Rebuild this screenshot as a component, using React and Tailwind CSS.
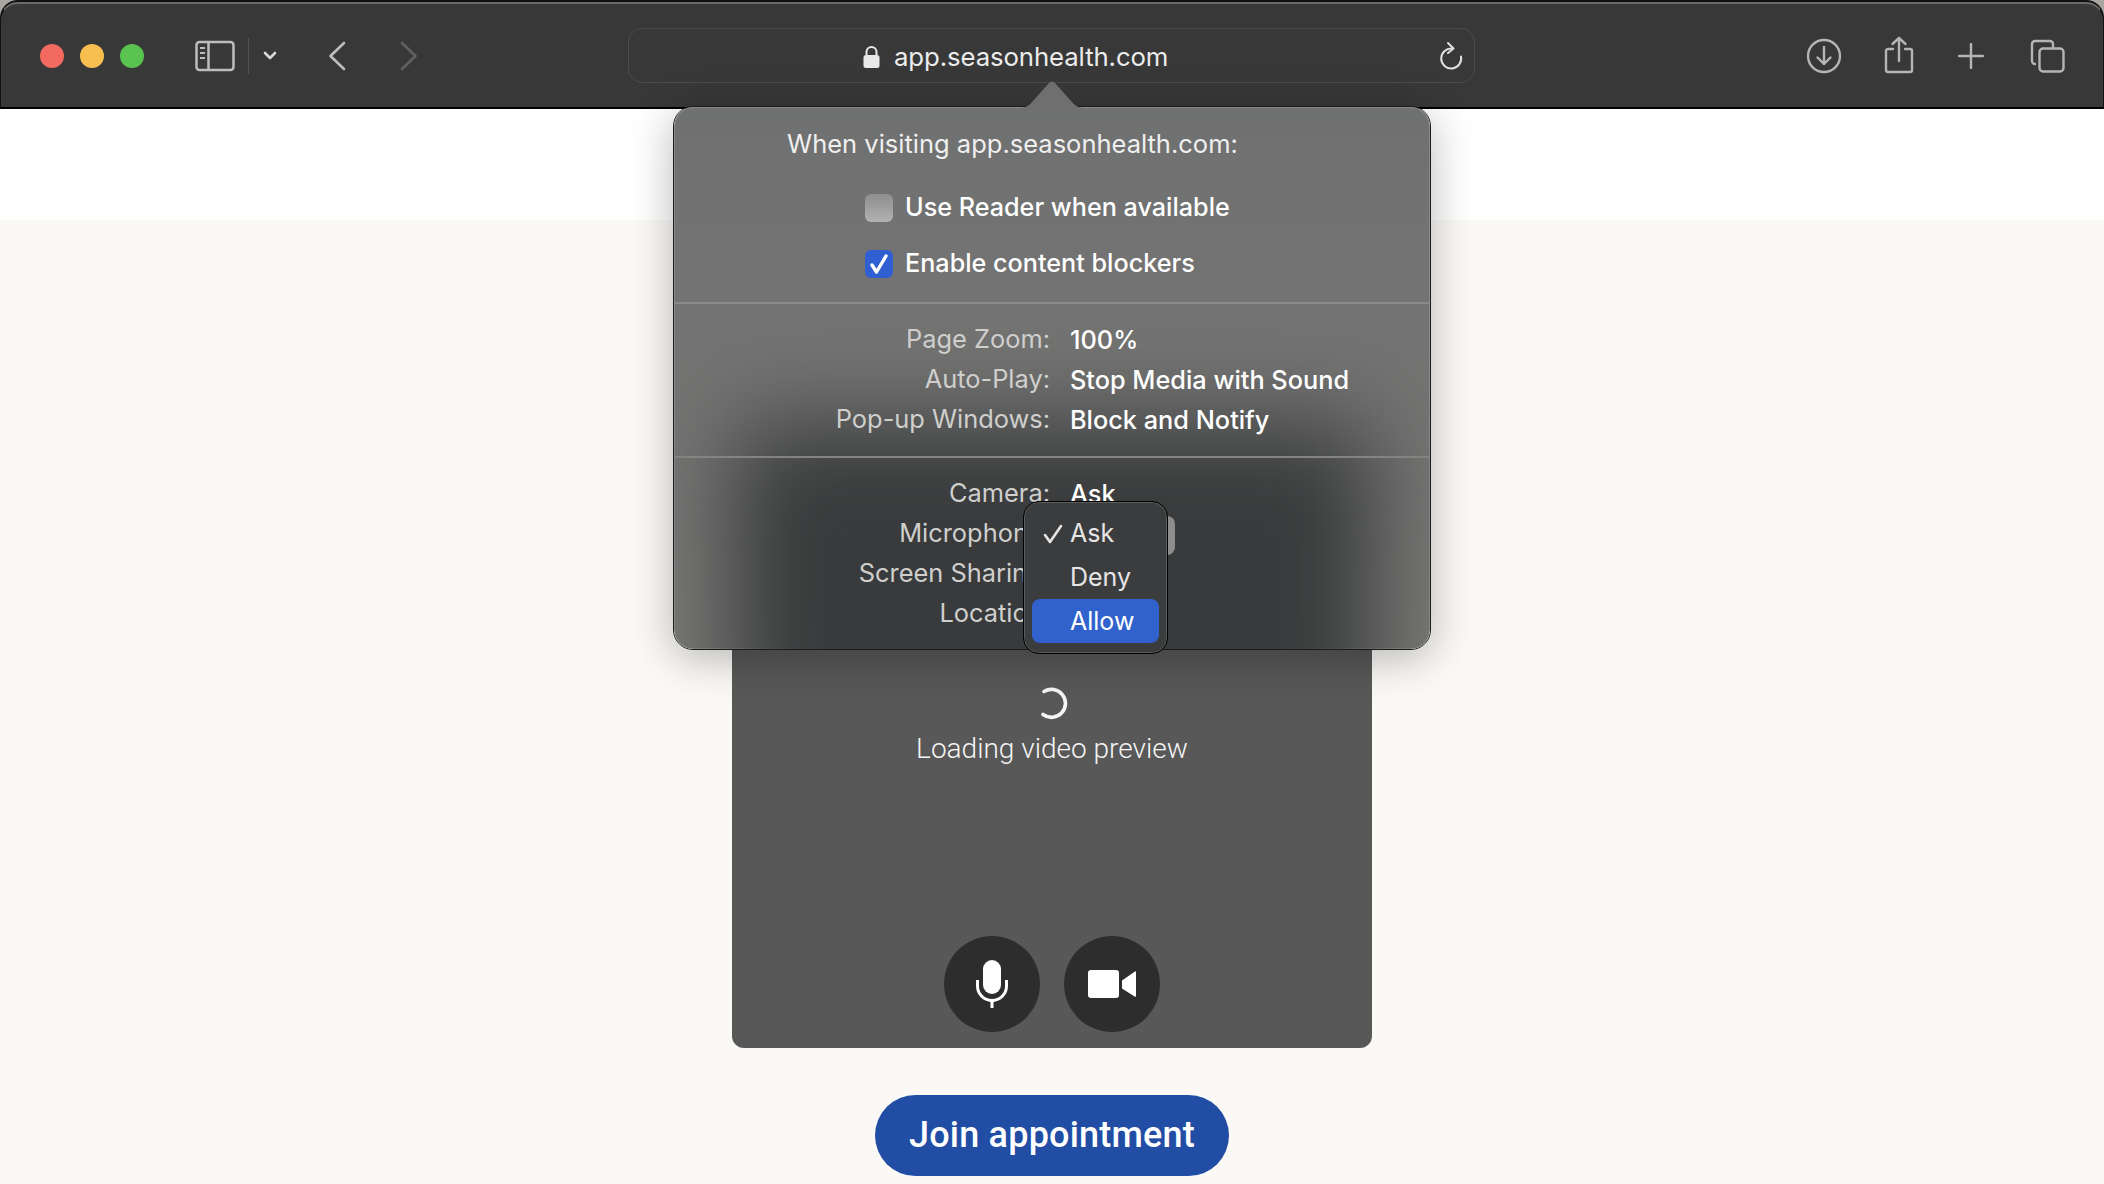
import React from "react";

const Row = ({ label, value }) => (
  <div className="flex h-10 items-center pb-[1px]">
    <div className="w-[376px] shrink-0 text-right text-[25.4px] text-[#cfcfcd]">{label}</div>
    <div className="ml-5 text-[25.3px] font-medium text-white">{value}</div>
  </div>
);

const Toolbar = () => (
  <div className="flex h-[107px] items-center rounded-t-[18px] border-t-2 border-b-2 border-x border-t-[#6a6a6a] border-b-black border-x-[#111] bg-[#383838] shadow-[0_-2px_0_#111] [font-family:Inter,sans-serif]">
    <div className="ml-[39px] flex gap-4">
      <span className="h-6 w-6 rounded-full bg-[#f26a60]" />
      <span className="h-6 w-6 rounded-full bg-[#f7bf4f]" />
      <span className="h-6 w-6 rounded-full bg-[#5ac350]" />
    </div>
    <svg className="ml-[51px]" width="40" height="32" viewBox="0 0 40 32" fill="none" stroke="#bdbdbd" strokeWidth="2.5">
      <rect x="1.5" y="2" width="37" height="28" rx="3" />
      <path d="M13.5 2v28" />
      <path d="M5 8h5M5 13h5M5 18h5" strokeWidth="2" />
    </svg>
    <span className="ml-[13px] h-9 w-px bg-[#505050]" />
    <svg className="ml-[14px]" width="14" height="10" viewBox="0 0 14 10" fill="none" stroke="#d8d8d8" strokeWidth="2.6" strokeLinecap="round" strokeLinejoin="round">
      <path d="M2 2l5 5 5-5" />
    </svg>
    <svg className="ml-[51px]" width="18" height="30" viewBox="0 0 18 30" fill="none" stroke="#bdbdbd" strokeWidth="2.6" strokeLinecap="round" strokeLinejoin="round">
      <path d="M16 2L2.5 15 16 28" />
    </svg>
    <svg className="ml-[54px]" width="18" height="30" viewBox="0 0 18 30" fill="none" stroke="#606060" strokeWidth="2.6" strokeLinecap="round" strokeLinejoin="round">
      <path d="M2 2l13.5 13L2 28" />
    </svg>
    <div className="relative ml-[210px] flex h-[55px] w-[847px] items-center rounded-[14px] border border-[#4c4c4c] pl-[234px] pt-[2px]">
      <svg className="mr-[14px]" width="17" height="24" viewBox="0 0 17 24" fill="#e8e8e8">
        <path d="M2.5 10V7a6 6 0 0 1 12 0v3h-2V7a4 4 0 0 0-8 0v3z" />
        <rect x="0.5" y="10" width="16" height="13" rx="2.5" />
      </svg>
      <span className="text-[25.75px] leading-none tracking-[-0.1px] text-[#ececec]">app.seasonhealth.com</span>
      <svg className="absolute right-[11px] top-[12px]" width="24" height="30" viewBox="0 0 24 30" fill="none" stroke="#e0e0e0" strokeWidth="2" strokeLinecap="round" strokeLinejoin="round">
        <path d="M13 7.5a10 10 0 1 0 9 8" />
        <path d="M9 2l5.5 5.5L9 12" />
      </svg>
    </div>
    <svg className="ml-[331px]" width="36" height="36" viewBox="0 0 36 36" fill="none" stroke="#b5b5b5" strokeWidth="2.4" strokeLinecap="round" strokeLinejoin="round">
      <circle cx="18" cy="18" r="16" />
      <path d="M18 9v17M11.5 19.5L18 26l6.5-6.5" />
    </svg>
    <svg className="ml-[42px] -mt-[2px]" width="30" height="38" viewBox="0 0 30 38" fill="none" stroke="#b5b5b5" strokeWidth="2.4" strokeLinecap="round" strokeLinejoin="round">
      <path d="M9 13H4a2 2 0 0 0-2 2v19a2 2 0 0 0 2 2h22a2 2 0 0 0 2-2V15a2 2 0 0 0-2-2h-5" />
      <path d="M15 25V2M8.5 8L15 2l6.5 6" />
    </svg>
    <svg className="ml-[44px]" width="26" height="26" viewBox="0 0 26 26" fill="none" stroke="#b5b5b5" strokeWidth="2.4" strokeLinecap="round">
      <path d="M13 1v24M1 13h24" />
    </svg>
    <svg className="ml-[46px]" width="36" height="34" viewBox="0 0 36 34" fill="none" stroke="#b5b5b5" strokeWidth="2.4">
      <path d="M6 25H5a3 3 0 0 1-3-3V5a3 3 0 0 1 3-3h15a3 3 0 0 1 3 3v4" />
      <rect x="9.5" y="9.5" width="24" height="23" rx="3.5" />
    </svg>
  </div>
);

export default function App() {
  return (
    <div className="relative h-[1184px] w-[2104px] overflow-hidden bg-[#a8a69e] pt-[2px] [font-family:Inter,sans-serif]">
      <Toolbar />
      <div className="h-[111px] bg-white" />
      <main className="flex h-[964px] flex-col items-center bg-[#faf9f6]">
        <section className="mt-[221px] flex h-[607px] w-[640px] flex-col items-center rounded-[12px] bg-[#585858] pb-[16px] pt-[246px]">
          <svg className="ml-[3px]" width="32" height="34" viewBox="0 0 32 34" fill="none" stroke="#f5f5f5" strokeWidth="3.6" strokeLinecap="round">
            <path d="M6 4.5A14 14 0 1 1 5 27.5" />
          </svg>
          <div className="mt-[10px] text-[28px] font-light leading-[36px] text-[#f5f5f5] [font-family:Roboto,sans-serif]">Loading video preview</div>
          <div className="mt-auto flex gap-6">
            <button className="flex h-24 w-24 items-center justify-center rounded-full bg-[#2d2d2d]">
              <svg width="34" height="48" viewBox="0 0 34 48" fill="#fff">
                <rect x="8" y="0" width="18" height="34" rx="9" />
                <path d="M1 20v6a16 16 0 0 0 14.5 15.9V48h3v-6.1A16 16 0 0 0 33 26v-6h-3v6a13 13 0 0 1-26 0v-6z" />
              </svg>
            </button>
            <button className="flex h-24 w-24 items-center justify-center rounded-full bg-[#2d2d2d]">
              <svg width="48" height="28" viewBox="0 0 48 28" fill="#fff">
                <rect x="0" y="0" width="31" height="28" rx="3" />
                <path d="M34 10.5L47 1.5a.7.7 0 0 1 1 .6v24a.7.7 0 0 1-1 .6l-13-8.2z" />
              </svg>
            </button>
          </div>
        </section>
        <button className="mt-[47px] h-[81px] w-[354px] rounded-full bg-[#214da5] pb-[2px] text-[36px] font-medium text-white [font-family:Roboto,sans-serif] tracking-[0.2px]">Join appointment</button>
      </main>

      <svg className="absolute left-[1016px] top-[80px] z-10" width="72" height="28" viewBox="0 0 72 28" fill="#6e6f6e">
        <path d="M0 28c8 0 12-1 16-6L33 3c2-2 4-2 6 0l17 19c4 5 8 6 16 6z" />
      </svg>

      <div className="absolute left-[673px] top-[106px] h-[544px] w-[758px] rounded-[20px] border border-[#1c1c1c] text-[25.2px] text-white shadow-[0_8px_44px_rgba(0,0,0,0.28)]">
        <div className="absolute inset-0 overflow-hidden rounded-[19px] bg-gradient-to-b from-[#6f7070] to-[#7a7a77] shadow-[inset_0_0_0_1px_rgba(255,255,255,0.18)]">
          <div className="absolute left-[59px] top-[316px] h-[440px] w-[640px] bg-[#383a3b] blur-[48px]" />
        </div>
        <div className="relative h-[197px] border-b-2 border-[#8a8a88]">
          <div className="pl-[113px] pt-[19px] text-[25.5px] leading-9 text-[#efefef]">When visiting app.seasonhealth.com:</div>
          <div className="mt-[18px] flex h-[56px] items-center pl-[191px]">
            <span className="h-[28px] w-[28px] rounded-[6px] bg-gradient-to-b from-[#8e8e8e] to-[#b2b2b2]" />
            <span className="ml-[12px] font-medium">Use Reader when available</span>
          </div>
          <div className="flex h-[56px] items-center pl-[191px]">
            <span className="flex h-[28px] w-[28px] items-center justify-center rounded-[6px] bg-[#2f5fd0]">
              <svg width="22" height="22" viewBox="0 0 22 22" fill="none" stroke="#fff" strokeWidth="3.4" strokeLinecap="round" strokeLinejoin="round">
                <path d="M4 12l4.5 7L18 3" />
              </svg>
            </span>
            <span className="ml-[12px] font-medium">Enable content blockers</span>
          </div>
        </div>
        <div className="relative h-[154px] border-b-2 border-[#838381] pt-[16px]">
          <Row label="Page Zoom:" value="100%" />
          <Row label="Auto-Play:" value="Stop Media with Sound" />
          <Row label="Pop-up Windows:" value="Block and Notify" />
        </div>
        <div className="relative pt-[16px]">
          <Row label="Camera:" value="Ask" />
          <Row label="Microphone:" value="" />
          <Row label="Screen Sharing:" value="" />
          <Row label="Location:" value="" />
        </div>

        <div className="absolute left-[349px] top-[394px] z-10 text-[25px]">
          <span className="absolute left-[130px] top-[15px] h-[39px] w-[22px] rounded-[8px] bg-[#8d8d8d]" />
          <div className="relative h-[153px] w-[145px] rounded-[16px] border border-black bg-[#3b3c3d] px-[8px] pt-[9px] shadow-[inset_0_0_0_1px_rgba(255,255,255,0.16)]">
            <div className="flex h-[44px] items-center pt-[2px] text-[#e6e6e6]">
              <svg className="ml-[11px]" width="20" height="20" viewBox="0 0 20 20" fill="none" stroke="#e6e6e6" strokeWidth="2.6" strokeLinecap="round" strokeLinejoin="round">
                <path d="M2 11l5 7L18 2" />
              </svg>
              <span className="ml-[7px]">Ask</span>
            </div>
            <div className="flex h-[44px] items-center pl-[38px] pt-[2px] text-[#e6e6e6]">Deny</div>
            <div className="flex h-[44px] items-center rounded-[8px] bg-[#3161cc] pl-[38px] pt-[1px] text-white">Allow</div>
          </div>
        </div>
      </div>
    </div>
  );
}
